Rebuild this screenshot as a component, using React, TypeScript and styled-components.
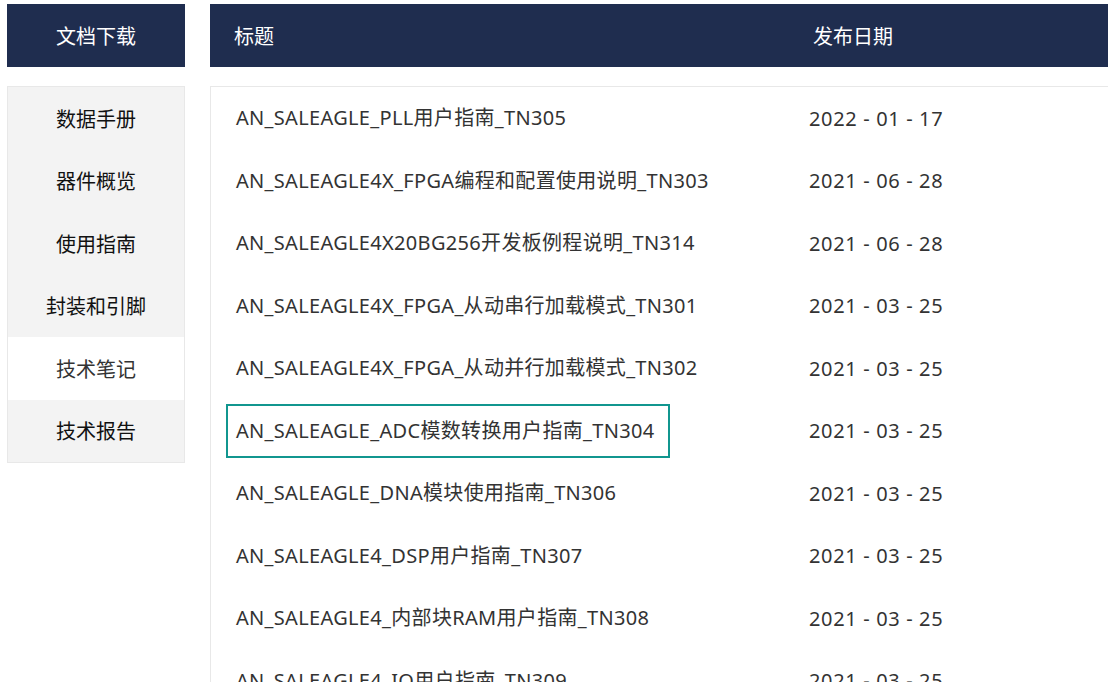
import React from "react";
import styled, { createGlobalStyle } from "styled-components";

const GlobalStyle = createGlobalStyle`
  html, body {
    margin: 0;
    padding: 0;
    background: #ffffff;
    overflow: hidden;
  }
  body {
    font-family: "Noto Sans", "Noto Sans CJK SC", sans-serif;
  }
`;

const Page = styled.div`
  display: flex;
  align-items: flex-start;
  gap: 25px;
  padding: 4px 0 0 7px;
  width: 1101px;
  height: 678px;
  overflow: hidden;
`;

const Sidebar = styled.aside`
  width: 178px;
  flex: none;
  display: flex;
  flex-direction: column;
  gap: 19px;
`;

const HeaderBar = styled.div`
  height: 63px;
  background: #1f2d4f;
  color: #ffffff;
  font-size: 20px;
  display: flex;
  align-items: center;
`;

const SideTitle = styled(HeaderBar)`
  justify-content: center;
`;

const Menu = styled.ul`
  list-style: none;
  margin: 0;
  padding: 0;
  border: 1px solid #e8e8e8;
  background: #f3f3f3;
`;

const MenuItem = styled.li<{ $active?: boolean }>`
  height: 62.5px;
  display: flex;
  align-items: center;
  justify-content: center;
  font-size: 20px;
  color: ${(p) => (p.$active ? "#333333" : "#111111")};
  background: ${(p) => (p.$active ? "#ffffff" : "transparent")};
`;

const Main = styled.section`
  flex: 1;
  min-width: 0;
  display: flex;
  flex-direction: column;
  gap: 19px;
`;

const TableHead = styled(HeaderBar)`
  padding-left: 24px;
`;

const HeadTitle = styled.div`
  width: 579px;
  flex: none;
`;

const HeadDate = styled.div``;

const Body = styled.div`
  border-left: 1px solid #e8e8e8;
  border-top: 1px solid #e8e8e8;
`;

const Row = styled.div`
  height: 62.5px;
  display: flex;
  align-items: center;
  padding-left: 15px;
  font-size: 20px;
  color: #333333;
`;

const TitleCell = styled.div`
  width: 583px;
  flex: none;
`;

const TitleText = styled.span<{ $focused?: boolean }>`
  display: inline-block;
  padding: 13px 14px 13px 8px;
  line-height: 24px;
  letter-spacing: 0.32px;
  border: 2px solid ${(p) => (p.$focused ? "#11968f" : "transparent")};
  white-space: nowrap;
`;

const DateCell = styled.div`
  white-space: pre;
  letter-spacing: 0.65px;
`;

const menu = ["数据手册", "器件概览", "使用指南", "封装和引脚", "技术笔记", "技术报告"];

const rows: [string, string][] = [
  ["AN_SALEAGLE_PLL用户指南_TN305", "2022 - 01 - 17"],
  ["AN_SALEAGLE4X_FPGA编程和配置使用说明_TN303", "2021 - 06 - 28"],
  ["AN_SALEAGLE4X20BG256开发板例程说明_TN314", "2021 - 06 - 28"],
  ["AN_SALEAGLE4X_FPGA_从动串行加载模式_TN301", "2021 - 03 - 25"],
  ["AN_SALEAGLE4X_FPGA_从动并行加载模式_TN302", "2021 - 03 - 25"],
  ["AN_SALEAGLE_ADC模数转换用户指南_TN304", "2021 - 03 - 25"],
  ["AN_SALEAGLE_DNA模块使用指南_TN306", "2021 - 03 - 25"],
  ["AN_SALEAGLE4_DSP用户指南_TN307", "2021 - 03 - 25"],
  ["AN_SALEAGLE4_内部块RAM用户指南_TN308", "2021 - 03 - 25"],
  ["AN_SALEAGLE4_IO用户指南_TN309", "2021 - 03 - 25"],
];

export default function App() {
  return (
    <>
      <GlobalStyle />
      <Page>
        <Sidebar>
          <SideTitle>文档下载</SideTitle>
          <Menu>
            {menu.map((m) => (
              <MenuItem key={m} $active={m === "技术笔记"}>
                {m}
              </MenuItem>
            ))}
          </Menu>
        </Sidebar>
        <Main>
          <TableHead>
            <HeadTitle>标题</HeadTitle>
            <HeadDate>发布日期</HeadDate>
          </TableHead>
          <Body>
            {rows.map(([t, d], i) => (
              <Row key={t}>
                <TitleCell>
                  <TitleText $focused={i === 5}>{t}</TitleText>
                </TitleCell>
                <DateCell>{d}</DateCell>
              </Row>
            ))}
          </Body>
        </Main>
      </Page>
    </>
  );
}
